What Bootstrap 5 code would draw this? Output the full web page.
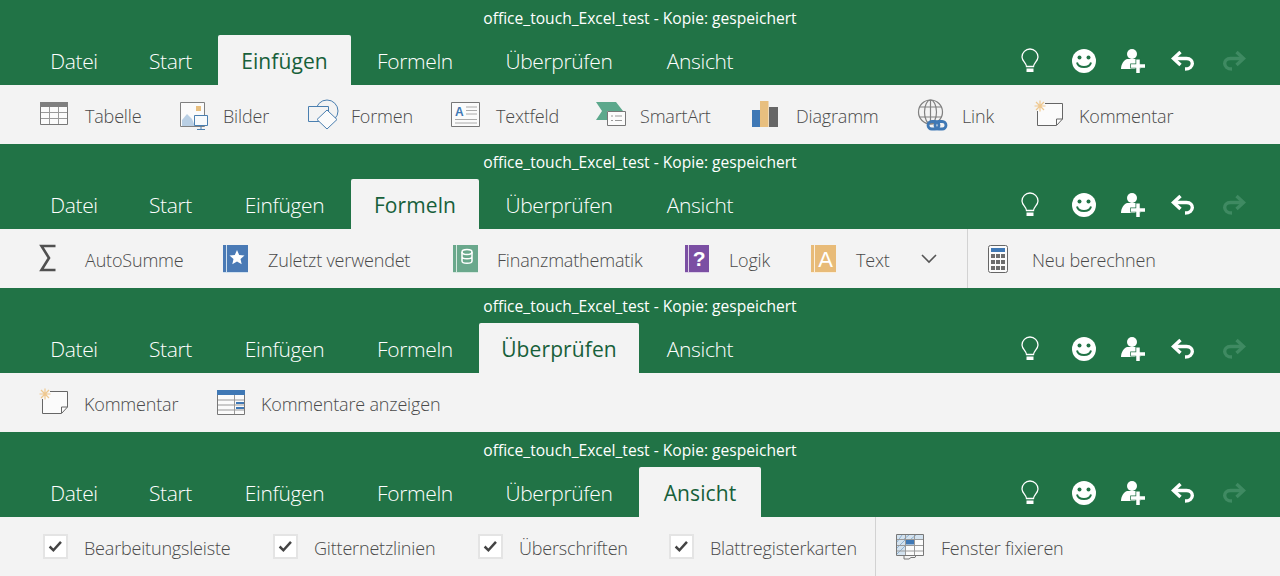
<!DOCTYPE html>
<html lang="de">
<head>
  <meta charset="UTF-8" />
  <title>Excel Touch Ribbon</title>
  <link href="https://cdn.jsdelivr.net/npm/bootstrap@5.3.0/dist/css/bootstrap.min.css" rel="stylesheet">
  <style>
    body { font-family: "Open Sans", "Noto Sans", sans-serif; background: #f3f3f3; overflow: hidden; }
    .xl-panel { height: 144px; background: #217346; }
    .xl-title { height: 35px; line-height: 37px; font-size: 15.6px; color: #fff; text-align: center; }
    .xl-tabs { height: 50px; padding-left: 23px; }
    .xl-tabs .nav-link { height: 50px; padding: 0; line-height: 52px; text-align: center; color: #fff; font-size: 21px; font-weight: 300; letter-spacing: -.35px; }
    .xl-tabs .nav-link.active { background: #f3f3f3; color: #17603a; font-weight: 400; letter-spacing: .1px; border-radius: 2px 2px 0 0; }
    .t-datei { width: 102px; }
    .xl-tabs .nav-link.t-start { width: 93px; padding-right: 2px; }
    .t-einf { width: 133px; }
    .t-form { width: 128px; }
    .t-ueber { width: 160px; }
    .t-ans { width: 122px; }
    .xl-heads { padding-right: 33px; }
    .xl-heads svg { width: 28px; height: 28px; }
    .xl-heads svg:nth-child(2) { margin-left: 26px; }
    .xl-heads svg:nth-child(3) { margin-left: 20px; }
    .xl-heads svg:nth-child(4) { margin-left: 24px; }
    .xl-heads svg:nth-child(5) { margin-left: 21px; }
    .xl-redo { color: #3f8a62; transform: scaleX(-1); }
    .xl-ribbon { height: 59px; background: #f3f3f3; color: #4a4a4a; font-size: 18px; font-weight: 300; letter-spacing: -.18px; }
    .xl-ribbon svg { overflow: visible; }
    .xl-start40 { padding-left: 40px; }
    .xl-start39 { padding-left: 39px; }
    .xl-item { padding-top: 4px; white-space: nowrap; flex: none; }
    .xl-item > svg { width: 30px; height: 32px; margin: -9px 15px 0 0; flex: none; }
    .w138 { width: 138px; } .w128 { width: 128px; } .w145 { width: 145px; } .w144 { width: 144px; }
    .w156 { width: 156px; } .w166 { width: 166px; } .w117 { width: 117px; }
    .w183 { width: 183px; } .w229 { width: 229px; } .w232 { width: 232px; } .w127 { width: 127px; } .w110 { width: 110px; }
    .w177 { width: 177px; } .w230 { width: 230px; } .w205 { width: 205px; } .w191 { width: 191px; } .w210 { width: 210px; }
    .xl-sep { width: 1px; align-self: stretch; background: #d2d2d2; }
    .xl-sep.after-chev { margin: 0 19px 0 30px; }
    .xl-sep.after-box { margin: 0 20px 0 0; }
    .xl-check.form-check-input { width: 25px; height: 25px; margin: -4px 16px 0 4px; flex: none; border: 2px solid #e4e4e4; border-radius: 0; }
    .xl-check.form-check-input:checked[type=checkbox] { background-color: #fff; border-color: #e4e4e4; --bs-form-check-bg-image: url("data:image/svg+xml,%3csvg xmlns='http://www.w3.org/2000/svg' viewBox='0 0 25 25'%3e%3cpath fill='none' stroke='%23444' stroke-width='3' d='M5.500 12.500l4.500 4.500 9-10'/%3e%3c/svg%3e"); }
    .xl-chev { width: 16px; height: 10px; flex: none; }
    .svg-defs { position: absolute; width: 0; height: 0; }
    symbol { overflow: visible; }
  </style>
</head>
<body>
  <svg class="svg-defs" aria-hidden="true">
    <symbol id="i-bulb" viewBox="0 0 28 28"><path d="M10.500 20.500c0-3.500-4.500-5.500-4.500-9.500a8 8 0 0 1 16 0c0 4-4.500 6-4.500 9.500z" fill="none" stroke="#fff" stroke-width="1.300"/><path d="M10.500 22.500h7V26h-7z" fill="#fff"/></symbol>
    <symbol id="i-smile" viewBox="0 0 28 28"><circle cx="14" cy="15" r="12" fill="#fff"/><circle cx="9.500" cy="11.500" r="2" fill="#217346"/><circle cx="18.500" cy="11.500" r="2" fill="#217346"/><path d="M7 16.500c1.500 6 12.500 6 14 0" fill="none" stroke="#217346" stroke-width="2"/></symbol>
    <symbol id="i-user" viewBox="0 0 28 28"><circle cx="14" cy="8" r="5" fill="#fff"/><path d="M3 23c0-5 3-9 6-10h9c3 1 5 4 5 10z" fill="#fff"/><path d="M18.250 13.500h3.500v4.750h5.250v3.500h-5.250V27h-3.500v-5.250H13v-3.500h5.250z" fill="#fff" stroke="#217346" stroke-width="1.500" paint-order="stroke"/></symbol>
    <symbol id="i-undo" viewBox="0 0 28 28"><path d="M10.500 6L3.500 12.500l7 6.500" fill="none" stroke="currentColor" stroke-width="3.400"/><path d="M4 12.500h12.500c8 0 8 10.500-1.500 10.500" fill="none" stroke="currentColor" stroke-width="3.400"/></symbol>
    <symbol id="i-table" viewBox="0 0 30 32"><path d="M.5 6.500h27v22H.5z" fill="#fbfbfb" stroke="#777"/><path d="M0 6h28v5H0z" fill="#7f7f7f"/><path d="M1 16.500h26M1 22.500h26M9.500 11v17M18.500 11v17" stroke="#999" fill="none"/></symbol>
    <symbol id="i-pics" viewBox="0 0 30 32"><path d="M2.500 6.500h24v24h-24z" fill="#fbfbfb" stroke="#808080"/><path d="M4 30v-6l5-6 5 5 3 7z" fill="#b9cfe4"/><path d="M18 10h5v5h-5z" fill="#e8bf7f"/><path d="M16.500 19.500h13v10h-13z" fill="#f7fafc" stroke="#4a7fb0"/><path d="M23 30v3M19 33.500h8" stroke="#4a7fb0" fill="none"/></symbol>
    <symbol id="i-shapes" viewBox="0 0 30 32"><circle cx="21" cy="15" r="11" fill="#f3f3f3" stroke="#4a7fb0"/><path d="M2.500 10.500h20v15h-20z" fill="#f3f3f3" stroke="#4a7fb0"/><path d="M21 14l10 9.500-10 9.500-10-9.500z" fill="#fbfbfb" stroke="#4a7fb0"/></symbol>
    <symbol id="i-smart" viewBox="0 0 30 32"><path d="M1 6h20l7 9H12v9H1l6-9z" fill="#5ca88c"/><path d="M12.500 15.500h18v14h-18z" fill="#fbfbfb" stroke="#777"/><path d="M16 20h2M20 20h7M16 24.500h2M20 24.500h7" stroke="#999" fill="none"/></symbol>
    <symbol id="i-chart" viewBox="0 0 30 32"><path d="M1 14h8v17H1z" fill="#3f78b5"/><path d="M9 5h8.500v26H9z" fill="#e8bf7f"/><path d="M18 11h9v20h-9z" fill="#666"/></symbol>
    <symbol id="i-link" viewBox="0 0 30 32"><g fill="none" stroke="#808080" stroke-width="1.200"><circle cx="13.500" cy="16" r="12"/><ellipse cx="13.500" cy="16" rx="6" ry="12"/><path d="M13.500 4v24M2.500 11h22M2.500 21h22"/></g><g fill="none" stroke="#3f78b5" stroke-width="2.800"><rect x="11" y="25.500" width="11" height="7.500" rx="3.750"/><rect x="18" y="25.500" width="11" height="7.500" rx="3.750"/></g></symbol>
    <symbol id="i-note" viewBox="0 0 30 32"><path d="M3.500 15V29.500h19l6-6.500V7.500H11z" fill="#fbfbfb"/><path d="M11 7.500h17.500V23l-6 6.500h-19V15" fill="none" stroke="#666"/><path d="M22.500 29v-6h6" fill="none" stroke="#666"/><path d="M6 4.500v11M.5 10h11M2 6l8 8M2 14l8-8" stroke="#efc88f" stroke-width="1.200"/></symbol>
    <symbol id="i-sum" viewBox="0 0 30 32"><path d="M15.500 6H1.500L9 18 1.500 30h14" fill="none" stroke="#505050" stroke-width="2.600"/></symbol>
    <symbol id="i-cal" viewBox="0 0 30 32"><rect x="1.500" y="5.500" width="19" height="27" rx="2" fill="#fbfbfb" stroke="#666"/><path d="M4 8h14v4H4z" fill="#3f78b5"/><path d="M4 14h4v4H4zM9 14h4v4H9zM14 14h4v4h-4zM4 20h4v4H4zM9 20h4v4H9zM14 20h4v4h-4zM4 26h4v4H4zM9 26h4v4H9zM14 26h4v4h-4z" fill="#6d6d6d"/></symbol>
    <symbol id="i-list" viewBox="0 0 30 32"><path d="M1.500 6.500h27v24h-27z" fill="#fbfbfb" stroke="#777"/><path d="M1 6h28v5H1z" fill="#3f78b5"/><path d="M2 16h26M2 21h26M2 26h26M18.500 11v19" stroke="#999" fill="none"/><path d="M20 18h8v2h-8zM20 23h8v2h-8z" fill="#3f78b5"/></symbol>
    <symbol id="i-freeze" viewBox="0 0 30 32"><path d="M.5 6.500h27v21H.5z" fill="#fbfbfb" stroke="#777"/><path d="M1 7h26v4H1zM1 11h9v16H1z" fill="#d3e2ef"/><path d="M1 14l5-7M8 11l5-4M15 11l5-4M1 20l9-9M1 26l9-9" stroke="#8fb1d0" fill="none"/><path d="M1 11.500h26M1 17.500h26M1 23h26M9.500 7v20M18.500 7v20" stroke="#999" fill="none"/><path d="M10 12h8v4.500h-8z" fill="#3f78b5"/><path d="M8 27.500v3.500h5l2-1.500h4l1-2" fill="none" stroke="#777"/></symbol>
    <symbol id="i-book-blue" viewBox="0 0 30 32"><path d="M0 5h25v28H0z" fill="#4a7ab5"/><path d="M3.500 5v27M0 32.500h25" stroke="#cfe0ef"/><path d="M14 10l2.200 5 5.300.5-4 3.500 1.200 5.300-4.700-2.800-4.700 2.800 1.200-5.300-4-3.500 5.300-.5z" fill="#fff"/></symbol>
  </svg>

  <section class="xl-panel">
    <div class="xl-title">office_touch_Excel_test - Kopie: gespeichert</div>
    <div class="d-flex">
      <ul class="nav xl-tabs">
        <li class="nav-item"><a class="nav-link t-datei" href="#">Datei</a></li>
        <li class="nav-item"><a class="nav-link t-start" href="#">Start</a></li>
        <li class="nav-item"><a class="nav-link t-einf active" href="#">Einfügen</a></li>
        <li class="nav-item"><a class="nav-link t-form" href="#">Formeln</a></li>
        <li class="nav-item"><a class="nav-link t-ueber" href="#">Überprüfen</a></li>
        <li class="nav-item"><a class="nav-link t-ans" href="#">Ansicht</a></li>
      </ul>
      <div class="xl-heads ms-auto d-flex align-items-center">
        <svg><use href="#i-bulb"/></svg><svg><use href="#i-smile"/></svg><svg><use href="#i-user"/></svg><svg class="text-white"><use href="#i-undo"/></svg><svg class="xl-redo"><use href="#i-undo"/></svg>
      </div>
    </div>
    <div class="xl-ribbon xl-start40 d-flex align-items-center">
      <div class="xl-item w138 d-flex align-items-center"><svg><use href="#i-table"/></svg>Tabelle</div>
      <div class="xl-item w128 d-flex align-items-center"><svg><use href="#i-pics"/></svg>Bilder</div>
      <div class="xl-item w145 d-flex align-items-center"><svg><use href="#i-shapes"/></svg>Formen</div>
      <div class="xl-item w144 d-flex align-items-center"><svg viewBox="0 0 30 32"><path d="M.5 6.500h28v24H.5z" fill="#fbfbfb" stroke="#777"/><text x="4" y="20" font-family="Liberation Sans, sans-serif" font-size="12" font-weight="700" fill="#3f78b5">A</text><path d="M15 11h11M15 14.500h11M15 18h11M4 23.500h22M4 27h22" stroke="#aaa" fill="none"/></svg>Textfeld</div>
      <div class="xl-item w156 d-flex align-items-center"><svg><use href="#i-smart"/></svg>SmartArt</div>
      <div class="xl-item w166 d-flex align-items-center"><svg><use href="#i-chart"/></svg>Diagramm</div>
      <div class="xl-item w117 d-flex align-items-center"><svg><use href="#i-link"/></svg>Link</div>
      <div class="xl-item d-flex align-items-center"><svg><use href="#i-note"/></svg>Kommentar</div>
    </div>
  </section>

  <section class="xl-panel">
    <div class="xl-title">office_touch_Excel_test - Kopie: gespeichert</div>
    <div class="d-flex">
      <ul class="nav xl-tabs">
        <li class="nav-item"><a class="nav-link t-datei" href="#">Datei</a></li>
        <li class="nav-item"><a class="nav-link t-start" href="#">Start</a></li>
        <li class="nav-item"><a class="nav-link t-einf" href="#">Einfügen</a></li>
        <li class="nav-item"><a class="nav-link t-form active" href="#">Formeln</a></li>
        <li class="nav-item"><a class="nav-link t-ueber" href="#">Überprüfen</a></li>
        <li class="nav-item"><a class="nav-link t-ans" href="#">Ansicht</a></li>
      </ul>
      <div class="xl-heads ms-auto d-flex align-items-center">
        <svg><use href="#i-bulb"/></svg><svg><use href="#i-smile"/></svg><svg><use href="#i-user"/></svg><svg class="text-white"><use href="#i-undo"/></svg><svg class="xl-redo"><use href="#i-undo"/></svg>
      </div>
    </div>
    <div class="xl-ribbon xl-start40 d-flex align-items-center">
      <div class="xl-item w183 d-flex align-items-center"><svg><use href="#i-sum"/></svg>AutoSumme</div>
      <div class="xl-item w229 d-flex align-items-center"><svg><use href="#i-book-blue"/></svg>Zuletzt verwendet</div>
      <div class="xl-item w232 d-flex align-items-center"><svg viewBox="0 0 30 32"><path d="M1 5h25v28H1z" fill="#6aa88c"/><path d="M4.500 5v27M1 32.500h25" stroke="#d6e8df"/><g fill="none" stroke="#fff" stroke-width="1.500"><ellipse cx="15" cy="12" rx="5" ry="2.500"/><path d="M10 12v9c0 3 10 3 10 0v-9M10 16.500c0 3 10 3 10 0"/></g></svg>Finanzmathematik</div>
      <div class="xl-item w127 d-flex align-items-center"><svg viewBox="0 0 30 32"><path d="M1 5h24v28H1z" fill="#7b4fa3"/><path d="M4.500 5v27M1 32.500h24" stroke="#ddd0e8"/><text x="15" y="26" text-anchor="middle" font-family="Liberation Sans, sans-serif" font-size="21" font-weight="700" fill="#fff">?</text></svg>Logik</div>
      <div class="xl-item w110 d-flex align-items-center"><svg viewBox="0 0 30 32"><path d="M0 5h25v28H0z" fill="#e8bb78"/><path d="M3.500 5v27M0 32.500h25" stroke="#fbeeda"/><text x="14.500" y="27" text-anchor="middle" font-family="Liberation Sans, sans-serif" font-size="22" fill="#fff">A</text></svg>Text</div>
      <svg class="xl-chev" viewBox="0 0 16 10"><path d="M1 1l7 7 7-7" fill="none" stroke="#555" stroke-width="1.600"/></svg>
      <div class="xl-sep after-chev"></div>
      <div class="xl-item d-flex align-items-center"><svg><use href="#i-cal"/></svg>Neu berechnen</div>
    </div>
  </section>

  <section class="xl-panel">
    <div class="xl-title">office_touch_Excel_test - Kopie: gespeichert</div>
    <div class="d-flex">
      <ul class="nav xl-tabs">
        <li class="nav-item"><a class="nav-link t-datei" href="#">Datei</a></li>
        <li class="nav-item"><a class="nav-link t-start" href="#">Start</a></li>
        <li class="nav-item"><a class="nav-link t-einf" href="#">Einfügen</a></li>
        <li class="nav-item"><a class="nav-link t-form" href="#">Formeln</a></li>
        <li class="nav-item"><a class="nav-link t-ueber active" href="#">Überprüfen</a></li>
        <li class="nav-item"><a class="nav-link t-ans" href="#">Ansicht</a></li>
      </ul>
      <div class="xl-heads ms-auto d-flex align-items-center">
        <svg><use href="#i-bulb"/></svg><svg><use href="#i-smile"/></svg><svg><use href="#i-user"/></svg><svg class="text-white"><use href="#i-undo"/></svg><svg class="xl-redo"><use href="#i-undo"/></svg>
      </div>
    </div>
    <div class="xl-ribbon xl-start39 d-flex align-items-center">
      <div class="xl-item w177 d-flex align-items-center"><svg><use href="#i-note"/></svg>Kommentar</div>
      <div class="xl-item d-flex align-items-center"><svg><use href="#i-list"/></svg>Kommentare anzeigen</div>
    </div>
  </section>

  <section class="xl-panel">
    <div class="xl-title">office_touch_Excel_test - Kopie: gespeichert</div>
    <div class="d-flex">
      <ul class="nav xl-tabs">
        <li class="nav-item"><a class="nav-link t-datei" href="#">Datei</a></li>
        <li class="nav-item"><a class="nav-link t-start" href="#">Start</a></li>
        <li class="nav-item"><a class="nav-link t-einf" href="#">Einfügen</a></li>
        <li class="nav-item"><a class="nav-link t-form" href="#">Formeln</a></li>
        <li class="nav-item"><a class="nav-link t-ueber" href="#">Überprüfen</a></li>
        <li class="nav-item"><a class="nav-link t-ans active" href="#">Ansicht</a></li>
      </ul>
      <div class="xl-heads ms-auto d-flex align-items-center">
        <svg><use href="#i-bulb"/></svg><svg><use href="#i-smile"/></svg><svg><use href="#i-user"/></svg><svg class="text-white"><use href="#i-undo"/></svg><svg class="xl-redo"><use href="#i-undo"/></svg>
      </div>
    </div>
    <div class="xl-ribbon xl-start39 d-flex align-items-center">
      <label class="xl-item w230 d-flex align-items-center"><input class="form-check-input xl-check" type="checkbox" checked>Bearbeitungsleiste</label>
      <label class="xl-item w205 d-flex align-items-center"><input class="form-check-input xl-check" type="checkbox" checked>Gitternetzlinien</label>
      <label class="xl-item w191 d-flex align-items-center"><input class="form-check-input xl-check" type="checkbox" checked>Überschriften</label>
      <label class="xl-item w210 d-flex align-items-center"><input class="form-check-input xl-check" type="checkbox" checked>Blattregisterkarten</label>
      <div class="xl-sep after-box"></div>
      <div class="xl-item d-flex align-items-center"><svg><use href="#i-freeze"/></svg>Fenster fixieren</div>
    </div>
  </section>
</body>
</html>
